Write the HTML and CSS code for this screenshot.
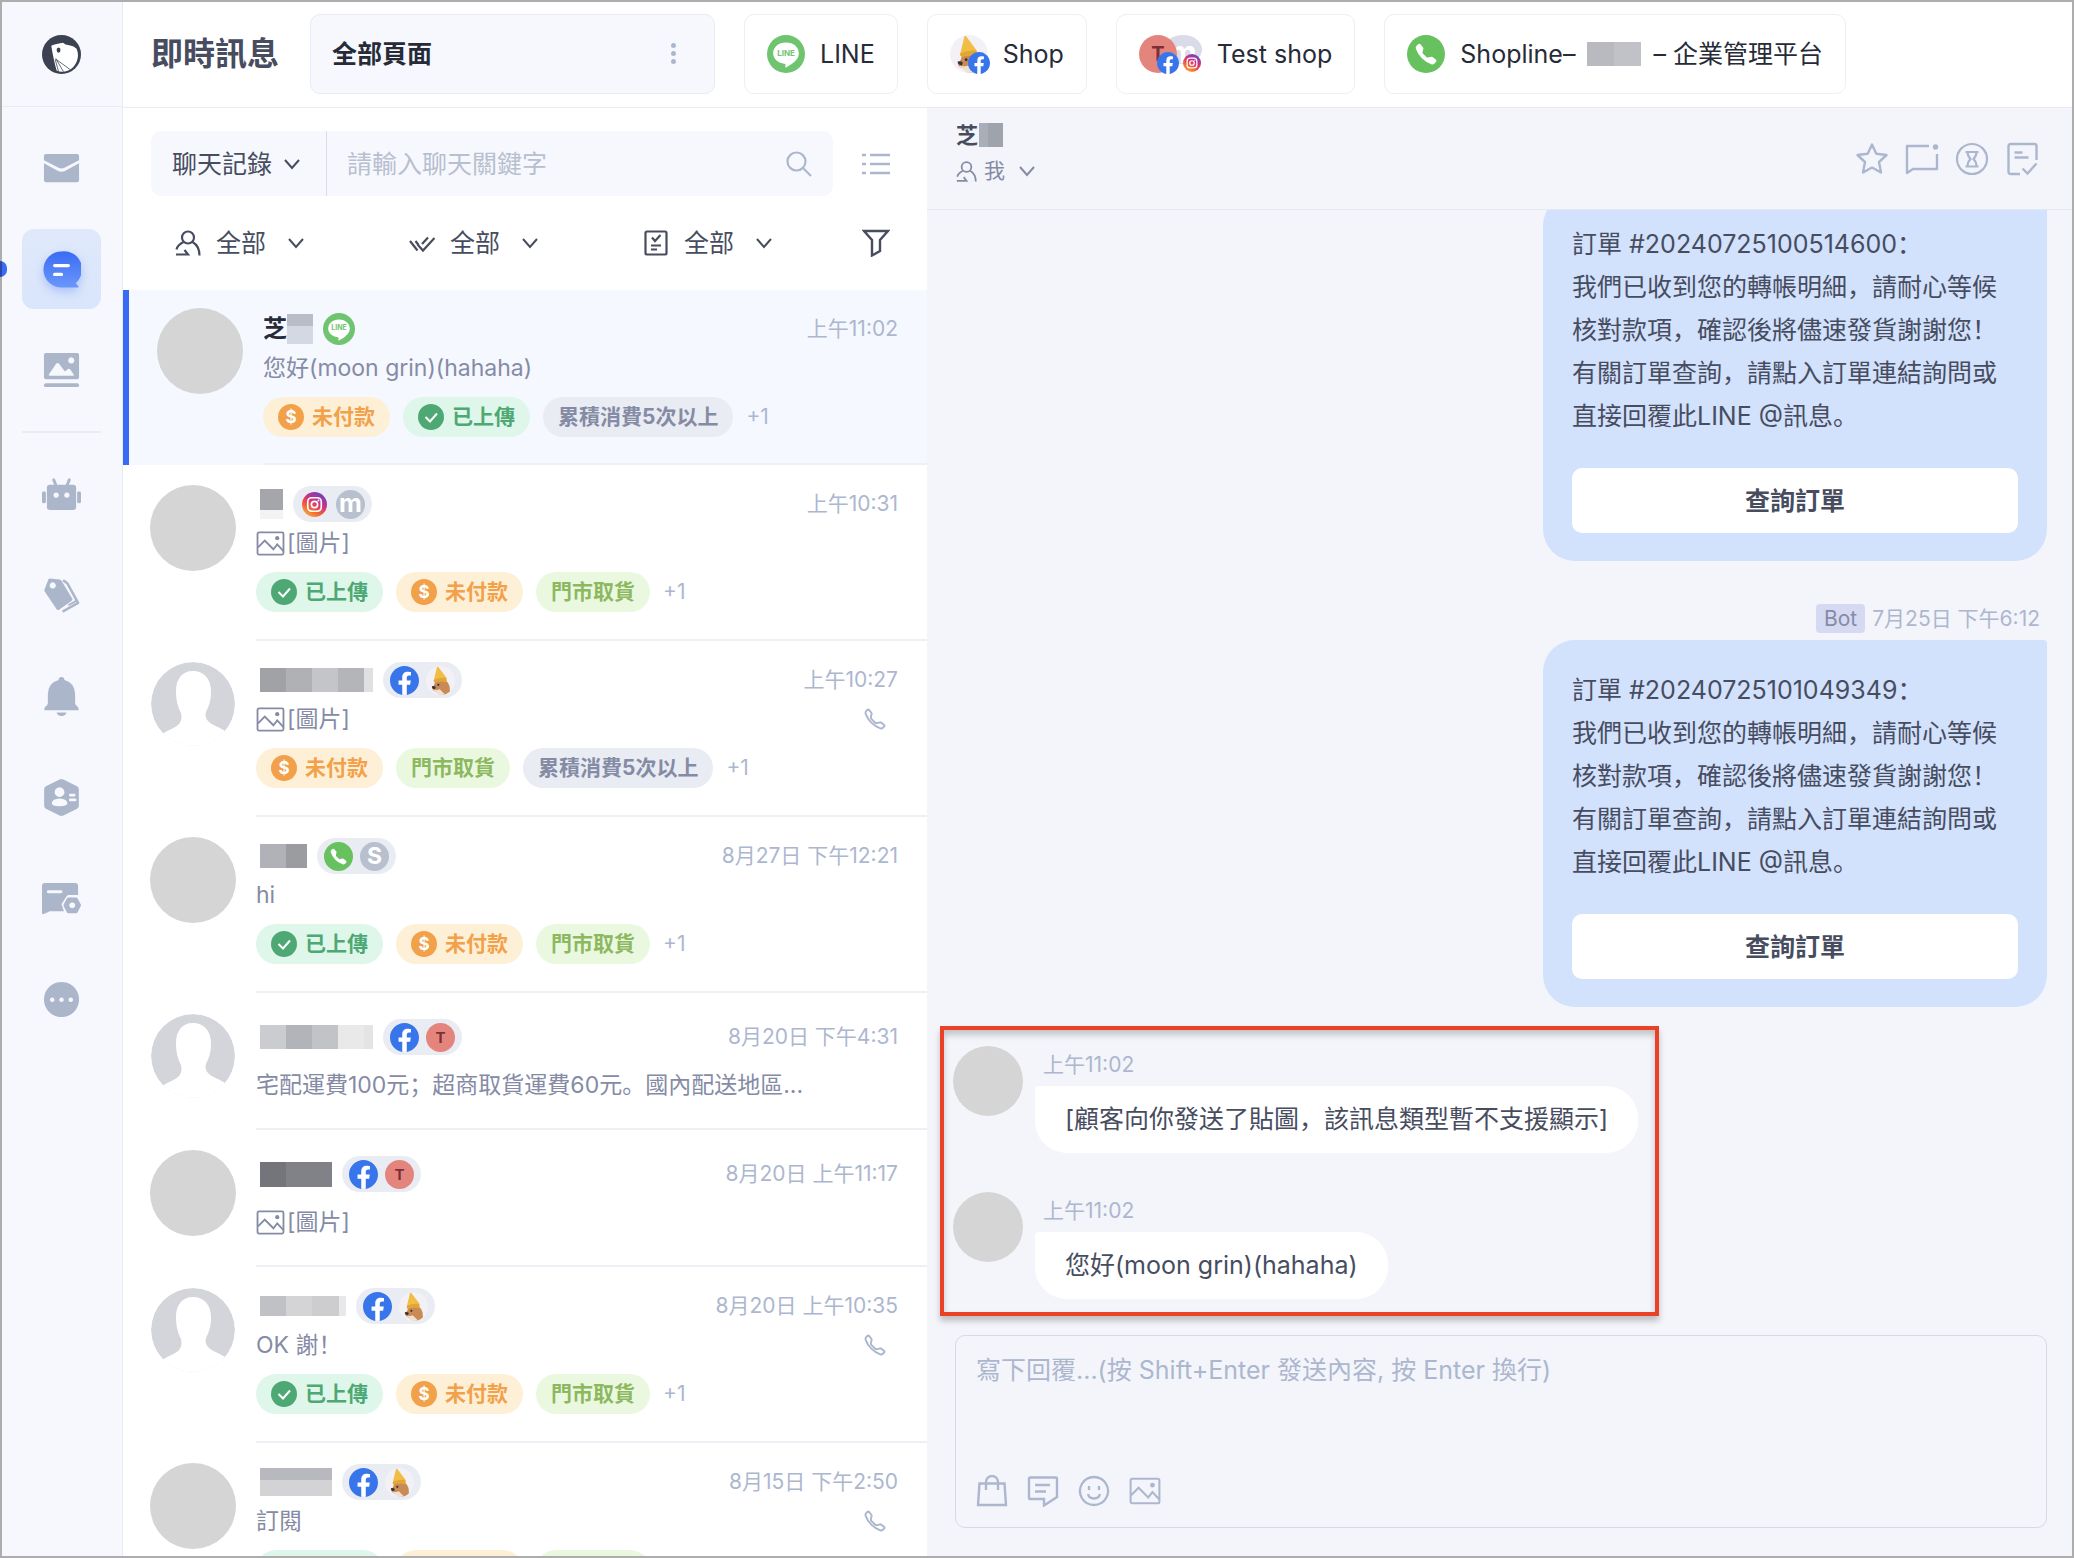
FILE: index.html
```html
<!DOCTYPE html>
<html lang="zh-Hans">
<head>
<meta charset="utf-8">
<meta name="viewport" content="width=device-width, initial-scale=1">
<title>即時訊息</title>
<link rel="stylesheet" href="styles.css">
</head>
<body>
<svg class="sprite" aria-hidden="true">
  <defs>
    <linearGradient id="g-chat" x1="0" y1="0" x2="0" y2="1"><stop offset="0" stop-color="#3a6bf4"/><stop offset="1" stop-color="#6b97fb"/></linearGradient>
    <linearGradient id="g-ig" x1="0.2" y1="1" x2="0.8" y2="0"><stop offset="0" stop-color="#fbb03b"/><stop offset="0.35" stop-color="#ee5a3a"/><stop offset="0.6" stop-color="#cf3083"/><stop offset="1" stop-color="#5a46c9"/></linearGradient>
    <clipPath id="c-round"><circle cx="20" cy="20" r="20"/></clipPath>
    <clipPath id="c-avatar"><circle cx="43" cy="43" r="42"/></clipPath>
  </defs>
  <symbol id="i-logo" viewBox="0 0 40 40"><circle cx="20" cy="20" r="20" fill="#3c4252"/><path d="M9.500 11 L12 10 Q18 8.500 21.500 8 Q23.500 10.500 28 10.500 Q33 11.500 35.500 14 A17.500 17.500 0 0 1 27 36.500 Q20 39 15 36.500 Q12 26 9.500 11Z" fill="#fff"/><ellipse cx="17" cy="15.500" rx="2" ry="2.600" fill="#3c4252"/><path d="M14.500 25 L29 35.500 M14 24 L22 37.500 M13.500 25 L17 37.500" stroke="#3c4252" stroke-width="0.800" fill="none"/></symbol>
  <symbol id="i-mail" viewBox="0 0 40 40"><path d="M4 5h32a2 2 0 0 1 2 2v4.500L22.500 19.500q-2.500 1-5 0L2 11.500V7a2 2 0 0 1 2-2Z M2 14.500l14.500 8q3.500 1.500 7 0L38 14.500V32a2 2 0 0 1-2 2H4a2 2 0 0 1-2-2Z"/></symbol>
  <symbol id="i-chat" viewBox="0 0 40 40"><path d="M20 1.500a18.500 18.500 0 1 0 0 37H36.500a1 1 0 0 0 .7-1.700L34.500 34A18.500 18.500 0 0 0 20 1.500Z" fill="url(#g-chat)"/><path d="M13 16h14M13 25h7" stroke="#fff" stroke-width="3.400" stroke-linecap="round"/></symbol>
  <symbol id="i-gallery" viewBox="0 0 40 40"><path fill-rule="evenodd" d="M4 2h32a2 2 0 0 1 2 2v23a2 2 0 0 1-2 2H4a2 2 0 0 1-2-2V4a2 2 0 0 1 2-2ZM8 25.500h23.500a1 1 0 0 0 1-1.500L29 19q-1.500-1.500-3 0l-2.500 2-6-8q-1.500-1.500-3 0L7 24q-.5 1 1 1.500ZM30 6.500a3.200 3.200 0 1 0 .01 0Z"/><rect x="2" y="33" width="36" height="4" rx="2"/></symbol>
  <symbol id="i-robot" viewBox="0 0 40 40"><rect x="0" y="17" width="4" height="12" rx="1.500"/><rect x="36" y="17" width="4" height="12" rx="1.500"/><path fill-rule="evenodd" d="M8 10h24a3 3 0 0 1 3 3v20a3 3 0 0 1-3 3H8a3 3 0 0 1-3-3V13a3 3 0 0 1 3-3ZM14.500 18a2.700 2.700 0 1 0 .01 0ZM25.500 18a2.700 2.700 0 1 0 .01 0Z"/><path d="M12 5l2.500 6M28 5l-2.500 6" stroke="currentColor" stroke-width="3" stroke-linecap="round"/></symbol>
  <symbol id="i-tags" viewBox="0 0 40 40"><path fill-rule="evenodd" d="M2.500 14 6.500 3.500Q7 2.500 8.500 2.500L18 3.500Q19 3.600 19.800 4.500L31 23Q32 24.500 30.500 25.500L17.500 34.500Q16 35.500 15 34L2.800 16Q2.200 15 2.500 14ZM11 6.500a3.200 3.200 0 1 0 .01 0Z"/><path d="M22.500 5 26 7.500 37 27.500 22 36" fill="none" stroke="currentColor" stroke-width="2.600" stroke-linejoin="round" stroke-linecap="round"/><path d="M27 30l9-5" stroke="currentColor" stroke-width="2"/></symbol>
  <symbol id="i-bell" viewBox="0 0 40 40"><path d="M17 3a3 3 0 0 1 6 0Q34 6 34 18v9q0 2 2.500 3.500Q38 31.500 37.500 34H2.500Q2 31.500 3.500 30.500 6 29 6 27V18Q6 6 17 3ZM15 36.500h10a5 3.500 0 0 1-10 0Z"/></symbol>
  <symbol id="i-hex" viewBox="0 0 40 40"><path fill-rule="evenodd" d="M18 1.500q2-1 4 0l14 7q1.800 1 1.800 3v17q0 2-1.800 3l-14 7q-2 1-4 0l-14-7q-1.800-1-1.800-3v-17q0-2 1.800-3ZM18 9.500a5 5 0 1 0 .01 0ZM18 21q-8 .5-8 5 0 3 8 3t8-3q0-4.500-8-5Z"/><path d="M29 17.500h4M29 22.500h5" stroke="#f6f8fd" stroke-width="2.800" stroke-linecap="round"/></symbol>
  <symbol id="i-card" viewBox="0 0 40 40"><path d="M3 4h31a3 3 0 0 1 3 3v9.500H27.500q-1.500 0-2.500 1.500l-5 8 2.500 7H8L2 36q-2 .5-2-1.500V7a3 3 0 0 1 3-3Z"/><path d="M6.500 13h13" stroke="#f6f8fd" stroke-width="3" stroke-linecap="round"/><path fill-rule="evenodd" d="M27 19h8q1 0 1.500 1l3.200 6q.5 1 0 2l-3.200 6q-.5 1-1.500 1h-8q-1 0-1.500-1l-3.200-6q-.5-1 0-2l3.200-6q.5-1 1.500-1ZM31 24a3 3 0 1 0 .01 0Z"/></symbol>
  <symbol id="i-more" viewBox="0 0 40 40"><path fill-rule="evenodd" d="M20 2a18 18 0 1 0 .01 0ZM10.500 18a2.300 2.300 0 1 1-.01 0ZM20 18a2.300 2.300 0 1 1-.01 0ZM29.500 18a2.300 2.300 0 1 1-.01 0Z"/></symbol>
  <symbol id="i-line" viewBox="0 0 40 40"><circle cx="20" cy="20" r="20" fill="#6fc46f"/><path d="M20 8c-8 0-13.500 5-13.500 11.300 0 5.700 4.900 10 11.700 10.900 1.800.3 1.300 1.200 1 3.300 0 1 .5 1 1.300.5 5.500-3.200 13-7.500 13-14.700C33.500 13 28 8 20 8Z" fill="#fff"/></symbol>
  <symbol id="i-fb" viewBox="0 0 24 24"><circle cx="12" cy="12" r="11.500" fill="#fff"/><path fill="#3875ea" d="M24 12.073c0-6.627-5.373-12-12-12s-12 5.373-12 12c0 5.990 4.388 10.954 10.125 11.854v-8.385H7.078v-3.470h3.047V9.430c0-3.007 1.792-4.669 4.533-4.669 1.312 0 2.686.235 2.686.235v2.953H15.830c-1.491 0-1.956.925-1.956 1.874v2.250h3.328l-.532 3.470h-2.796v8.385C19.612 23.027 24 18.062 24 12.073z"/></symbol>
  <symbol id="i-ig" viewBox="0 0 24 24"><circle cx="12" cy="12" r="12" fill="url(#g-ig)"/><rect x="5.500" y="5.500" width="13" height="13" rx="4" fill="none" stroke="#fff" stroke-width="1.600"/><circle cx="12" cy="12" r="3" fill="none" stroke="#fff" stroke-width="1.600"/><circle cx="15.800" cy="8.200" r="0.900" fill="#fff"/></symbol>
  <symbol id="i-wa" viewBox="0 0 24 24"><circle cx="12" cy="12" r="12" fill="#67c15e"/><path transform="translate(5 5) scale(.88)" fill="#fff" stroke="#fff" stroke-width="1" d="M3.654 1.328a.678.678 0 0 0-1.015-.063L1.605 2.300c-.483.484-.661 1.169-.45 1.770a17.600 17.600 0 0 0 4.168 6.608 17.600 17.600 0 0 0 6.608 4.168c.601.211 1.286.033 1.770-.45l1.034-1.034a.678.678 0 0 0-.063-1.015l-2.307-1.794a.68.68 0 0 0-.58-.122l-2.190.547a1.750 1.750 0 0 1-1.657-.459L5.482 8.062a1.750 1.750 0 0 1-.46-1.657l.548-2.190a.68.68 0 0 0-.122-.58z"/></symbol>
  <symbol id="i-dog" viewBox="0 0 40 40"><g clip-path="url(#c-round)"><rect width="40" height="40" fill="#f3f1f5"/><path d="M13 21Q12 26 8.500 30q0 4 5 5l6 5h12q2.500-6 1-12-1.500-5-5-8Z" fill="#c98a55"/><path d="M10 32q5 2 9 0l3 3 5 5H17l-3-5q-4-1-4-3Z" fill="#f0e2d3"/><path d="M8 28q3.500-1 5.500 1l-1 3q-4.500 0-4.500-4Z" fill="#3d3234"/><circle cx="17" cy="26" r="1.500" fill="#3d3234"/><path d="M11 19 15 2q1-2.500 2.500 0L28 16q1.500 3 0 6-7-2-16 1Q10 21 11 19Z" fill="#f0bd45"/><path d="M11 19q9-3.500 16.500-2.500L28 22q-7-2-16 1Q10 21 11 19Z" fill="#e2a636"/></g></symbol>
  <symbol id="i-down" viewBox="0 0 16 16"><path d="M1 4l7 8 7-8" fill="none" stroke="currentColor" stroke-width="2"/></symbol>
  <symbol id="i-search" viewBox="0 0 26 26"><g fill="none" stroke="currentColor" stroke-width="2.200"><circle cx="10.500" cy="10.500" r="9"/><path d="M17 17l8 8"/></g></symbol>
  <symbol id="i-list" viewBox="0 0 28 24"><path d="M0 3h4M8 3h20M0 12h4M8 12h20M0 21h4M8 21h20" stroke="currentColor" stroke-width="2.600"/></symbol>
  <symbol id="i-person" viewBox="0 0 26 26"><g fill="none" stroke="currentColor" stroke-width="2.200"><circle cx="13" cy="7.500" r="6"/><path d="M8.500 12Q2.500 15 1.500 19.500M17.500 12Q24.500 16 24.500 25.500M1 24.500H13L9.500 20"/></g></symbol>
  <symbol id="i-checks" viewBox="0 0 26 26"><path d="M1 11l7.500 9.500M6.500 11l3 4M8.500 14.500l5.500 6L25.500 8M13 14L19 7.500" fill="none" stroke="currentColor" stroke-width="2.200"/></symbol>
  <symbol id="i-task" viewBox="0 0 26 26"><g fill="none" stroke="currentColor" stroke-width="2.200"><rect x="2.500" y="1.500" width="21" height="23" rx="1.500"/><path d="M9 7.500l3 3.500 5.500-6M8 15.500h10M8 19.500h6"/></g></symbol>
  <symbol id="i-funnel" viewBox="0 0 28 28"><path d="M2 2H26L18 11V22L10 26.500V11Z" fill="none" stroke="currentColor" stroke-width="2.400"/></symbol>
  <symbol id="i-picture" viewBox="0 0 30 26"><g fill="none" stroke="currentColor" stroke-width="1.900"><rect x="1.500" y="1.500" width="27" height="23" rx="1.500"/><path d="M2 17l7-7 9 9 4-5 6.500 7"/></g><circle cx="22" cy="7.500" r="2.200" fill="currentColor"/></symbol>
  <symbol id="i-phone" viewBox="0 0 16 16"><path fill="none" stroke="currentColor" stroke-width="1.400" d="M3.654 1.328a.678.678 0 0 0-1.015-.063L1.605 2.300c-.483.484-.661 1.169-.45 1.770a17.600 17.600 0 0 0 4.168 6.608 17.600 17.600 0 0 0 6.608 4.168c.601.211 1.286.033 1.770-.45l1.034-1.034a.678.678 0 0 0-.063-1.015l-2.307-1.794a.68.68 0 0 0-.58-.122l-2.190.547a1.750 1.750 0 0 1-1.657-.459L5.482 8.062a1.750 1.750 0 0 1-.46-1.657l.548-2.190a.68.68 0 0 0-.122-.58z"/></symbol>
  <symbol id="i-done" viewBox="0 0 26 26"><circle cx="13" cy="13" r="13" fill="#4ea873"/><path d="M7.500 13l4.500 4.500 7-8" fill="none" stroke="#fff" stroke-width="2"/></symbol>
  <symbol id="i-nobody" viewBox="0 0 86 86"><g clip-path="url(#c-avatar)"><circle cx="43" cy="43" r="42" fill="#d3d5da"/><path d="M43 10C32 10 26 18 26 30c0 10 2 16 5 22 1 5 .5 9-3 12-6 5-15 6-20 13v12h71V74c-5-7-14-8-20-13-3.500-3-4-7-3-10 3-6 5-11 5-21C61 18 54 10 43 10Z" fill="#fff"/></g></symbol>
  <symbol id="i-star" viewBox="0 0 34 34"><path d="M17 2.500 21.300 11.800 31.500 13 24 20 26 30.500 17 25.500 8 30.500 10 20 2.500 13 12.700 11.800Z" fill="none" stroke="currentColor" stroke-width="2.400" stroke-linejoin="round"/></symbol>
  <symbol id="i-unread" viewBox="0 0 34 34"><path d="M24 4H2V31L8 27H32V12" fill="none" stroke="currentColor" stroke-width="2.400" stroke-linejoin="round"/><circle cx="30.500" cy="5" r="2.700" fill="currentColor"/></symbol>
  <symbol id="i-hourglass" viewBox="0 0 34 34"><g fill="none" stroke="currentColor" stroke-width="2.200"><circle cx="17" cy="17" r="15"/><path d="M10.500 10h13M10.500 24.500h13M12.500 10q0 4 3 7-3 3-3 7.500M21.500 10q0 4-3 7 3 3 3 7.500"/></g></symbol>
  <symbol id="i-note" viewBox="0 0 34 34"><path d="M15 32H5.500a2 2 0 0 1-2-2V4a2 2 0 0 1 2-2h24a2 2 0 0 1 2 2v14M9.500 10.500h8M9.500 15.500h14M17.500 26.500l5 5 9-10" fill="none" stroke="currentColor" stroke-width="2.400"/></symbol>
  <symbol id="i-bag" viewBox="0 0 32 32"><path d="M3.500 8.500H28.500L30 30H2ZM10 15V7a6 6 0 0 1 12 0v8" fill="none" stroke="currentColor" stroke-width="2.400"/></symbol>
  <symbol id="i-quick" viewBox="0 0 32 32"><path d="M3 2.500H29a1 1 0 0 1 1 1V22l-13 8.500V24H3a1 1 0 0 1-1-1V3.500a1 1 0 0 1 1-1ZM8 10h15M8 16.500h11" fill="none" stroke="currentColor" stroke-width="2.400"/></symbol>
  <symbol id="i-smile" viewBox="0 0 32 32"><path d="M16 2a14 14 0 1 0 .01 0ZM11 11v4M21 11v4M10 19q1 4.500 6 4.500t6-4.500" fill="none" stroke="currentColor" stroke-width="2.300"/></symbol>
</svg>

<div class="app">
  <aside class="rail">
    <a class="rail-logo" href="#" aria-label="首頁"><svg><use href="#i-logo"/></svg></a>
    <nav class="rail-nav">
      <a href="#" aria-label="收件匣"><svg><use href="#i-mail"/></svg></a>
      <a class="current" href="#" aria-label="即時訊息"><svg><use href="#i-chat"/></svg></a>
      <a href="#" aria-label="素材"><svg><use href="#i-gallery"/></svg></a>
      <hr>
      <a href="#" aria-label="機器人"><svg><use href="#i-robot"/></svg></a>
      <a href="#" aria-label="標籤"><svg><use href="#i-tags"/></svg></a>
      <a href="#" aria-label="通知"><svg><use href="#i-bell"/></svg></a>
      <a href="#" aria-label="會員"><svg><use href="#i-hex"/></svg></a>
      <a href="#" aria-label="訊息設定"><svg><use href="#i-card"/></svg></a>
      <a href="#" aria-label="更多"><svg><use href="#i-more"/></svg></a>
    </nav>
  </aside>

  <header class="topbar">
    <h1>即時訊息</h1>
    <div class="all-pages">
      <button type="button" class="all-pages-name">全部頁面</button>
      <button type="button" class="dots" aria-label="選項"><i></i><i></i><i></i></button>
    </div>
    <button type="button" class="channel"><span class="line-badge ch-icon"><svg><use href="#i-line"/></svg><span>LINE</span></span>LINE</button>
    <button type="button" class="channel"><span class="badged"><svg class="ch-icon"><use href="#i-dog"/></svg><svg class="mini"><use href="#i-fb"/></svg></span>Shop</button>
    <button type="button" class="channel"><span class="stack"><span class="badged"><span class="letter letter-t ch-icon">T</span><svg class="mini"><use href="#i-fb"/></svg></span><span class="badged behind"><span class="letter letter-m ch-icon">m</span><svg class="mini small"><use href="#i-ig"/></svg></span></span>Test shop</button>
    <button type="button" class="channel"><svg class="ch-icon"><use href="#i-wa"/></svg><span class="masked-name">Shopline–<i class="mask mask-title"></i>– 企業管理平台</span></button>
  </header>

  <section class="inbox">
    <div class="search-row">
      <div class="search">
        <label class="pick scope"><select aria-label="搜尋範圍"><option>聊天記錄</option></select><svg class="caret"><use href="#i-down"/></svg></label>
        <input type="text" aria-label="搜尋" placeholder="請輸入聊天關鍵字">
        <button type="button" class="icon-btn" aria-label="搜尋"><svg class="s26"><use href="#i-search"/></svg></button>
      </div>
      <button type="button" class="icon-btn list-btn" aria-label="列表"><svg><use href="#i-list"/></svg></button>
    </div>
    <div class="filters">
      <div class="filter-group">
        <label class="pick filter"><svg class="s26"><use href="#i-person"/></svg><select aria-label="負責人"><option>全部</option></select><svg class="caret"><use href="#i-down"/></svg></label>
        <label class="pick filter"><svg class="s26"><use href="#i-checks"/></svg><select aria-label="狀態"><option>全部</option></select><svg class="caret"><use href="#i-down"/></svg></label>
        <label class="pick filter"><svg class="s26"><use href="#i-task"/></svg><select aria-label="任務"><option>全部</option></select><svg class="caret"><use href="#i-down"/></svg></label>
      </div>
      <button type="button" class="icon-btn funnel" aria-label="篩選"><svg><use href="#i-funnel"/></svg></button>
    </div>

    <ul class="threads">
      <li><a class="thread active" href="#">
        <span class="avatar"></span>
        <div class="body">
          <div class="top"><b class="name">芝</b><i class="mask mask-1"></i><span class="line-badge solo"><svg><use href="#i-line"/></svg><span>LINE</span></span><time>上午11:02</time></div>
          <div class="text"><span class="snippet">您好(moon grin)(hahaha)</span></div>
          <div class="tags"><span class="tag orange"><span class="coin">$</span>未付款</span><span class="tag mint"><svg><use href="#i-done"/></svg>已上傳</span><span class="tag gray">累積消費5次以上</span><span class="plus">+1</span></div>
        </div></a></li>
      <li><a class="thread" href="#">
        <span class="avatar"></span>
        <div class="body">
          <div class="top"><i class="mask mask-2"></i><span class="pill"><svg class="ig"><use href="#i-ig"/></svg><span class="letter letter-m">m</span></span><time>上午10:31</time></div>
          <div class="text"><svg class="pic"><use href="#i-picture"/></svg><span class="snippet">[圖片]</span></div>
          <div class="tags"><span class="tag mint"><svg><use href="#i-done"/></svg>已上傳</span><span class="tag orange"><span class="coin">$</span>未付款</span><span class="tag lime">門市取貨</span><span class="plus">+1</span></div>
        </div></a></li>
      <li><a class="thread" href="#">
        <svg class="nobody"><use href="#i-nobody"/></svg>
        <div class="body">
          <div class="top"><i class="mask mask-3"></i><span class="pill"><svg><use href="#i-fb"/></svg><svg><use href="#i-dog"/></svg></span><time>上午10:27</time></div>
          <div class="text"><svg class="pic"><use href="#i-picture"/></svg><span class="snippet">[圖片]</span><svg class="call"><use href="#i-phone"/></svg></div>
          <div class="tags"><span class="tag orange"><span class="coin">$</span>未付款</span><span class="tag lime">門市取貨</span><span class="tag gray">累積消費5次以上</span><span class="plus">+1</span></div>
        </div></a></li>
      <li><a class="thread" href="#">
        <span class="avatar"></span>
        <div class="body">
          <div class="top"><i class="mask mask-4"></i><span class="pill"><svg><use href="#i-wa"/></svg><span class="letter letter-s">S</span></span><time>8月27日 下午12:21</time></div>
          <div class="text"><span class="snippet">hi</span></div>
          <div class="tags"><span class="tag mint"><svg><use href="#i-done"/></svg>已上傳</span><span class="tag orange"><span class="coin">$</span>未付款</span><span class="tag lime">門市取貨</span><span class="plus">+1</span></div>
        </div></a></li>
      <li><a class="thread plain" href="#">
        <svg class="nobody"><use href="#i-nobody"/></svg>
        <div class="body">
          <div class="top"><i class="mask mask-5"></i><span class="pill"><svg><use href="#i-fb"/></svg><span class="letter letter-t">T</span></span><time>8月20日 下午4:31</time></div>
          <div class="text"><span class="snippet">宅配運費100元；超商取貨運費60元。國內配送地區...</span></div>
        </div></a></li>
      <li><a class="thread plain" href="#">
        <span class="avatar"></span>
        <div class="body">
          <div class="top"><i class="mask mask-6"></i><span class="pill"><svg><use href="#i-fb"/></svg><span class="letter letter-t">T</span></span><time>8月20日 上午11:17</time></div>
          <div class="text"><svg class="pic"><use href="#i-picture"/></svg><span class="snippet">[圖片]</span></div>
        </div></a></li>
      <li><a class="thread" href="#">
        <svg class="nobody"><use href="#i-nobody"/></svg>
        <div class="body">
          <div class="top"><i class="mask mask-7"></i><span class="pill"><svg><use href="#i-fb"/></svg><svg><use href="#i-dog"/></svg></span><time>8月20日 上午10:35</time></div>
          <div class="text"><span class="snippet">OK 謝！</span><svg class="call"><use href="#i-phone"/></svg></div>
          <div class="tags"><span class="tag mint"><svg><use href="#i-done"/></svg>已上傳</span><span class="tag orange"><span class="coin">$</span>未付款</span><span class="tag lime">門市取貨</span><span class="plus">+1</span></div>
        </div></a></li>
      <li><a class="thread" href="#">
        <span class="avatar"></span>
        <div class="body">
          <div class="top"><i class="mask mask-8"></i><span class="pill"><svg><use href="#i-fb"/></svg><svg><use href="#i-dog"/></svg></span><time>8月15日 下午2:50</time></div>
          <div class="text"><span class="snippet">訂閱</span><svg class="call"><use href="#i-phone"/></svg></div>
          <div class="tags"><span class="tag mint"></span><span class="tag orange"></span><span class="tag lime"></span></div>
        </div></a></li>
    </ul>
  </section>

  <main class="chat">
    <header class="chat-head">
      <div class="who">
        <h2>芝<i class="mask mask-head"></i></h2>
        <button type="button" class="owner"><svg class="owner-icon"><use href="#i-person"/></svg>我<svg class="caret"><use href="#i-down"/></svg></button>
      </div>
      <div class="chat-actions">
        <button type="button" class="icon-btn" aria-label="加星號"><svg><use href="#i-star"/></svg></button>
        <button type="button" class="icon-btn" aria-label="標為未讀"><svg><use href="#i-unread"/></svg></button>
        <button type="button" class="icon-btn" aria-label="待處理"><svg><use href="#i-hourglass"/></svg></button>
        <button type="button" class="icon-btn" aria-label="備註"><svg><use href="#i-note"/></svg></button>
      </div>
    </header>

    <div class="log">
      <article class="order">
        <p>訂單 #20240725100514600：<br>我們已收到您的轉帳明細，請耐心等候核對款項，確認後將儘速發貨謝謝您！<br>有關訂單查詢，請點入訂單連結詢問或直接回覆此LINE @訊息。</p>
        <button type="button">查詢訂單</button>
      </article>
      <div class="stamp"><span class="bot">Bot</span><time>7月25日 下午6:12</time></div>
      <article class="order">
        <p>訂單 #20240725101049349：<br>我們已收到您的轉帳明細，請耐心等候核對款項，確認後將儘速發貨謝謝您！<br>有關訂單查詢，請點入訂單連結詢問或直接回覆此LINE @訊息。</p>
        <button type="button">查詢訂單</button>
      </article>
      <section class="marked">
        <article class="incoming"><span class="face"></span><div><time>上午11:02</time><p>[顧客向你發送了貼圖，該訊息類型暫不支援顯示]</p></div></article>
        <article class="incoming"><span class="face"></span><div><time>上午11:02</time><p>您好(moon grin)(hahaha)</p></div></article>
      </section>
    </div>

    <form class="composer">
      <textarea aria-label="回覆" placeholder="寫下回覆...(按 Shift+Enter 發送內容, 按 Enter 換行)"></textarea>
      <div class="tools">
        <button type="button" class="icon-btn" aria-label="商品"><svg><use href="#i-bag"/></svg></button>
        <button type="button" class="icon-btn" aria-label="快速回覆"><svg><use href="#i-quick"/></svg></button>
        <button type="button" class="icon-btn" aria-label="表情"><svg><use href="#i-smile"/></svg></button>
        <button type="button" class="icon-btn" aria-label="圖片"><svg><use href="#i-picture"/></svg></button>
      </div>
    </form>
  </main>
</div>
</body>
</html>
```
FILE: styles.css
```css
:root {
  --ink: #272b38;
  --text: #474d5f;
  --muted: #858ba5;
  --faint: #acb7cf;
  --line: #e8ebf1;
  --panel: #f6f8fd;
  --chat: #f3f5fa;
}

* { box-sizing: border-box; }

body {
  margin: 0;
  background: #fff;
  color: var(--text);
  font: 25px/32px Inter, "Noto Sans CJK SC", sans-serif;
}

body::after {
  content: "";
  position: fixed;
  inset: 0;
  border: 2px solid rgba(0, 0, 0, .32);
  pointer-events: none;
}

button, input, select, textarea {
  font: inherit;
  color: inherit;
  background: none;
  border: 0;
  padding: 0;
  margin: 0;
  outline: 0;
}

button { cursor: pointer; }
a { color: inherit; text-decoration: none; }
svg { display: block; flex: none; fill: currentColor; }
h1, h2, p, ul { margin: 0; padding: 0; }
ul { list-style: none; }

.sprite { position: absolute; width: 0; height: 0; }

.app {
  display: grid;
  grid-template-columns: 121px minmax(0, 804fr) minmax(0, 1145fr);
  grid-template-rows: auto minmax(0, 1fr);
  height: 100vh;
  padding: 2px;
  overflow: hidden;
}

/* Left rail */
.rail {
  grid-row: 1 / 3;
  background: var(--panel);
  border-right: 1px solid var(--line);
}

.rail-logo {
  display: grid;
  place-items: center;
  height: 105px;
  padding-right: 1px;
  border-bottom: 1px solid var(--line);
}

.rail-logo svg { width: 39px; height: 39px; }

.rail-nav {
  display: flex;
  flex-direction: column;
  align-items: center;
  gap: 21px;
  padding: 21px 1px 0 0;
  color: #acb6cb;
}

.rail-nav a {
  position: relative;
  display: grid;
  place-items: center;
  width: 79px;
  height: 80px;
  border-radius: 12px;
}

.rail-nav svg { width: 39px; height: 39px; }

.rail-nav .current { background: linear-gradient(#e0e9fb, #d9e5fb); }
.rail-nav .current svg { filter: drop-shadow(0 4px 5px rgba(58, 107, 244, .3)); }

.rail-nav .current::before {
  content: "";
  position: absolute;
  left: -29px;
  top: 32px;
  width: 14px;
  height: 16px;
  border-radius: 8px;
  background: #3a6bf4;
}

.rail-nav hr {
  width: 79px;
  height: 2px;
  margin: 0;
  border: 0;
  background: #e9ecf2;
}

/* Top bar */
.topbar {
  grid-column: 2 / 4;
  display: flex;
  align-items: center;
  gap: 29px;
  height: 106px;
  padding: 0 29px 2px 28px;
  border-bottom: 1px solid var(--line);
  color: var(--ink);
  white-space: nowrap;
}

.topbar h1 { margin-right: 2px; font-size: 32px; line-height: 40px; color: var(--text); }

.all-pages {
  display: flex;
  align-items: center;
  justify-content: space-between;
  flex: 0 1 405px;
  height: 80px;
  padding: 0 38px 0 21px;
  border: 1px solid var(--line);
  border-radius: 10px;
  background: var(--panel);
}

.all-pages-name { font-weight: 700; }

.dots { display: grid; gap: 3px; }
.dots i { width: 5px; height: 5px; border-radius: 50%; background: var(--faint); }

.channel {
  display: flex;
  align-items: center;
  gap: 15px;
  height: 80px;
  padding: 0 22px;
  border: 1px solid #edeff4;
  border-radius: 10px;
}

.ch-icon { width: 38px; height: 38px; }
.badged { position: relative; flex: none; }
.mini { position: absolute; right: -2px; bottom: -1px; width: 22px; height: 22px; }
.mini.small { right: 1px; bottom: 1px; width: 18px; height: 18px; }
.stack { display: flex; }
.stack .badged { z-index: 1; }
.stack .behind { z-index: 0; margin-left: -13px; }

.masked-name { display: flex; align-items: center; gap: 12px; }

/* Round badges that carry text */
.line-badge {
  display: grid;
  flex: none;
  place-items: center;
  font-size: 8px;
  line-height: 12px;
  font-weight: 700;
  color: #6fc46f;
}

.line-badge > * { grid-area: 1 / 1; }
.line-badge svg { width: 100%; height: 100%; }
.line-badge span { padding-bottom: 2px; }

.letter {
  display: block;
  flex: none;
  width: 29px;
  border-radius: 50%;
  font-weight: 700;
  line-height: 29px;
  text-align: center;
}

.letter-t { background: #e4857d; color: #7d2f38; font-size: 15px; }
.letter-m { height: 29px; background: #b8c0cf; color: #fff; font-size: 25px; line-height: 26px; }
.letter-s { background: #b8c0cf; color: #fff; font-size: 23px; }
.letter.ch-icon { width: 38px; line-height: 38px; }
.letter-t.ch-icon { font-size: 20px; }
.letter-m.ch-icon { background: #d9dbe8; font-size: 30px; line-height: 34px; }

.coin {
  width: 26px;
  border-radius: 50%;
  background: #f2a14a;
  color: #fff;
  font-size: 17px;
  line-height: 26px;
  text-align: center;
}

/* Redacted names */
.mask { flex: none; display: block; }
.mask-title { width: 54px; height: 24px; background: linear-gradient(90deg, #b9babf 50%, #c1c2c7 50%); }
.mask-1 { width: 26px; height: 30px; background: linear-gradient(#b9bdc8 40%, #d4d8e2 40%); }
.mask-2 { width: 23px; height: 30px; background: linear-gradient(#a5a6ab 70%, #f3f3f5 70%); }
.mask-3 { width: 113px; height: 24px; background: linear-gradient(90deg, #a1a2a6 23%, #b0b1b5 23% 46%, #c4c5c8 46% 69%, #b4b5b9 69% 92%, #e0e0e3 92%); }
.mask-4 { width: 47px; height: 24px; background: linear-gradient(90deg, #b1b2b7 55%, #9b9ca0 55%); }
.mask-5 { width: 113px; height: 24px; background: linear-gradient(90deg, #cbccd0 23%, #b3b4b9 23% 46%, #c2c3c7 46% 69%, #e9e9ea 69% 92%, #e4e4e6 92%); }
.mask-6 { width: 72px; height: 25px; background: linear-gradient(90deg, #74757a 36%, #818287 36%); }
.mask-7 { width: 86px; height: 20px; background: linear-gradient(90deg, #c0c1c5 30%, #d4d4d7 30% 61%, #cdcdd0 61% 92%, #e8e8ea 92%); }
.mask-8 { width: 72px; height: 28px; background: linear-gradient(#b8b9be 43%, #d3d3d6 43%); }
.mask-head { width: 24px; height: 24px; background: linear-gradient(90deg, #a9afb9 36%, #9ea3ac 36%); }

/* Conversation list */
.inbox {
  display: flex;
  flex-direction: column;
  min-height: 0;
  background: #fff;
}

.search-row {
  display: flex;
  align-items: center;
  gap: 29px;
  padding: 23px 37px 0 28px;
}

.search {
  display: flex;
  align-items: center;
  flex: 1;
  min-width: 0;
  height: 65px;
  padding-right: 21px;
  border-radius: 10px;
  background: var(--panel);
  color: var(--faint);
}

.pick { display: flex; align-items: center; color: var(--text); }
.pick select { appearance: none; height: 32px; }
.caret { width: 16px; height: 16px; }

.scope {
  gap: 11px;
  height: 65px;
  padding: 0 26px 0 21px;
  border-right: 1px solid #d8dde6;
}

.search input { flex: 1; min-width: 0; height: 40px; padding-left: 20px; }
::placeholder { color: #b8bfd0; opacity: 1; }

.icon-btn { flex: none; }
.s26 { width: 26px; height: 26px; }
.list-btn { color: var(--faint); }
.list-btn svg { width: 28px; height: 24px; }

.filters {
  display: flex;
  align-items: center;
  gap: 90px;
  padding: 31px 37px 31px 52px;
  color: var(--text);
}

.filter-group { display: flex; flex: 1; justify-content: space-between; }
.filter .s26 { margin-right: 15px; }
.filter .caret { margin-left: 21px; }
.funnel svg { width: 28px; height: 28px; }

.threads { flex: 1; min-height: 0; overflow: hidden; }

.thread { display: flex; gap: 20px; padding-left: 27px; color: var(--muted); }
.thread.active { padding-left: 28px; border-left: 6px solid #3a6bf4; background: #f5f8fe; }

.avatar, .nobody { flex: none; width: 86px; height: 86px; margin-top: 20px; }
.active .avatar { margin-top: 18px; }
.avatar, .face { border-radius: 50%; background: #d5d5d5; }

.body {
  flex: 1;
  min-width: 0;
  padding: 21px 29px 27px 0;
  border-bottom: 2px solid #eef0f5;
}

.active .body { padding-bottom: 26px; }

.top { display: flex; align-items: center; gap: 10px; height: 36px; }
.top > .mask:first-child { margin-left: 4px; }
.name { color: var(--ink); font-size: 24px; margin-right: -10px; }
.solo { width: 32px; height: 32px; font-size: 7px; }

time { font-size: 21px; line-height: 30px; color: var(--faint); white-space: nowrap; }
.top time { margin-left: auto; }

.pill {
  display: flex;
  align-items: center;
  gap: 7px;
  height: 36px;
  padding: 0 7px;
  border-radius: 18px;
  background: #e9ecf2;
}

.pill svg { width: 29px; height: 29px; }
.pill .ig { width: 25px; height: 25px; margin: 0 2px; }

.text {
  display: flex;
  align-items: center;
  gap: 2px;
  height: 30px;
  margin-top: 6px;
  font-size: 23px;
  line-height: 30px;
}

.snippet { overflow: hidden; text-overflow: ellipsis; white-space: nowrap; }
.pic { width: 29px; height: 25px; }
.call { width: 22px; height: 22px; margin: 0 12px 0 auto; color: var(--faint); }

.tags { display: flex; align-items: center; gap: 13px; margin-top: 14px; font-size: 21px; }

.tag {
  display: flex;
  align-items: center;
  gap: 8px;
  min-width: 116px;
  height: 40px;
  padding: 0 15px;
  border-radius: 20px;
  font-weight: 700;
  white-space: nowrap;
}

.tag:empty { min-width: 127px; }
.tag.lime:empty { min-width: 114px; }

.tag svg { width: 26px; height: 26px; }
.orange { background: #fdf0d6; color: #f2a14a; }
.mint { background: #def7ea; color: #4ea873; }
.lime { min-width: 114px; background: #ebf8e0; color: #8cb85f; }
.gray { background: #e9ecf2; color: var(--muted); }
.plus { color: var(--faint); }

.plain .body { padding: 26px 29px 28px 0; }
.plain .text { margin-top: 15px; }

/* Chat */
.chat {
  display: flex;
  flex-direction: column;
  min-height: 0;
  padding-bottom: 28px;
  background: var(--chat);
}

.chat-head {
  display: flex;
  justify-content: space-between;
  height: 102px;
  padding: 9px 33px 0 29px;
  border-bottom: 1px solid #e4e8ef;
}

.who h2 { display: flex; align-items: center; gap: 1px; font-size: 22px; line-height: 36px; }
.owner { display: flex; align-items: center; font-size: 21px; line-height: 36px; color: var(--muted); }
.owner-icon { width: 21px; height: 21px; margin-right: 7px; }
.owner .caret { margin-left: 14px; }

.chat-actions { display: flex; gap: 16px; padding-top: 25px; color: var(--faint); }
.chat-actions .icon-btn { height: 34px; }
.chat-actions svg { width: 34px; height: 34px; }

.log {
  display: flex;
  flex-direction: column;
  justify-content: flex-end;
  flex: 1;
  min-height: 0;
  padding: 0 25px 19px 13px;
  overflow: hidden;
}

.log > * { flex: none; }

.order {
  align-self: flex-end;
  width: 504px;
  max-width: 100%;
  padding: 29px 29px 28px;
  border-radius: 32px 4px 32px 32px;
  background: #d2e1fc;
}

.order p { line-height: 43px; }

.order button {
  display: block;
  width: 100%;
  height: 65px;
  margin-top: 30px;
  border-radius: 10px;
  background: #fff;
  font-weight: 700;
}

.stamp {
  display: flex;
  align-items: center;
  justify-content: flex-end;
  gap: 7px;
  margin: 43px 7px 7px 0;
  font-size: 21px;
}

.bot {
  height: 29px;
  padding: 0 8px;
  border-radius: 4px;
  background: #d6d9f2;
  color: var(--muted);
  line-height: 29px;
}

.stamp time { line-height: 29px; }

.marked {
  display: flex;
  flex-direction: column;
  align-self: flex-start;
  gap: 39px;
  margin-top: 19px;
  padding: 16px 17px 13px 9px;
  border: 4px solid #ea4127;
  box-shadow: 0 5px 6px rgba(0, 0, 0, .22), inset 0 5px 6px rgba(0, 0, 0, .2);
}

.incoming { display: flex; gap: 12px; }
.face { flex: none; width: 70px; height: 70px; }
.incoming div { padding-top: 4px; }
.incoming time { display: block; padding-left: 8px; }

.incoming p {
  width: fit-content;
  margin-top: 6px;
  padding: 0 30px;
  border-radius: 4px 32px 32px 32px;
  background: #fff;
  line-height: 67px;
}

.composer {
  display: flex;
  flex-direction: column;
  justify-content: space-between;
  height: 193px;
  margin: 0 25px 0 28px;
  padding: 16px 20px 20px;
  border: 1px solid #d5dae7;
  border-radius: 10px;
}

.composer textarea { display: block; width: 100%; height: 80px; line-height: 36px; resize: none; }
.composer ::placeholder { color: var(--faint); }

.tools { display: flex; gap: 19px; color: var(--faint); }
.tools svg { width: 32px; height: 32px; }
```
